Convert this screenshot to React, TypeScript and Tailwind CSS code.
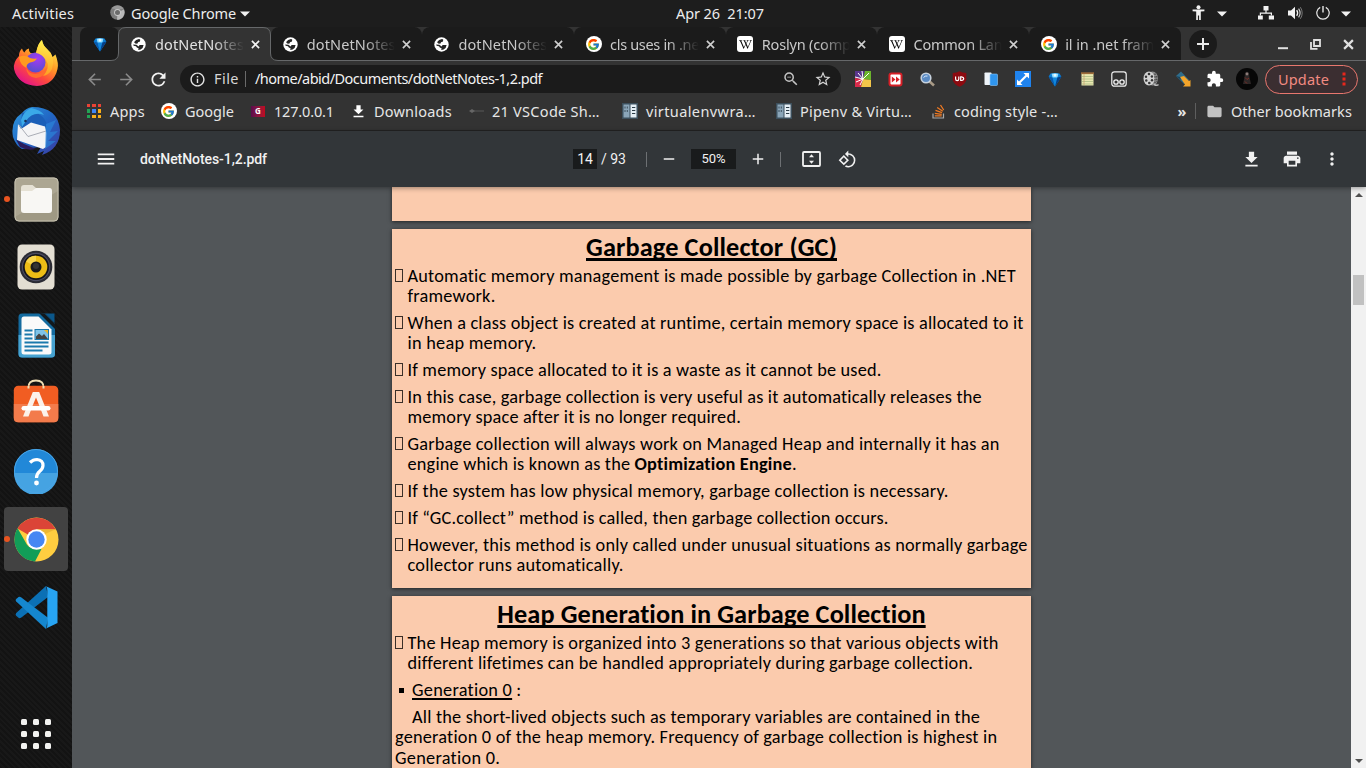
import { useLayoutEffect, useRef } from "react";
import type { ReactNode } from "react";
import { FcGoogle } from "react-icons/fc";
import { FaWikipediaW } from "react-icons/fa";
import {
  MdArrowBack, MdArrowForward, MdRefresh, MdInfoOutline, MdZoomOut, MdStarBorder, MdExtension,
  MdFolder, MdMenu, MdFileDownload, MdPrint, MdMoreVert, MdRotate90DegreesCcw, MdAdd, MdRemove,
} from "react-icons/md";

/* Text run tracked so that it fills exactly `w` pixels. */
function Fit({ w, className = "", children }: { w: number; className?: string; children: ReactNode }) {
  const ref = useRef<HTMLSpanElement>(null);
  useLayoutEffect(() => {
    const el = ref.current;
    if (!el) return;
    el.style.letterSpacing = "0px";
    const natural = el.getBoundingClientRect().width;
    const n = (el.textContent || "x").length;
    el.style.letterSpacing = `${(w - natural) / n}px`;
  }, [w]);
  return <span ref={ref} className={`inline-block shrink-0 whitespace-pre ${className}`}>{children}</span>;
}

/* ---------- small icons ---------- */
function Globe() {
  return (
    <svg width="15" height="15" viewBox="0 0 15 15" className="shrink-0">
      <circle cx="7.5" cy="7.5" r="7.2" fill="#fff" />
      <path d="M8 2 Q4.600 2.300 3 5.200 L4.800 6.800 L6.600 6.600 L7 5.200 L9 4.600 L9.200 2.600Z" fill="#262626" />
      <path d="M2.200 7.400 L5.400 7.800 L7.600 9.400 L8.600 8 L12.600 8 Q12.400 11 9.600 12.600 L7.200 13 L7.600 11.200 L5.800 10.400 L5 9.200 L2.600 8.800Z" fill="#262626" />
    </svg>
  );
}
function GoogleDisc({ className }: { className: string }) {
  return <span className={`flex size-4 shrink-0 items-center justify-center rounded-full bg-white ${className}`}><FcGoogle size={13} /></span>;
}
function Wiki({ className }: { className: string }) {
  return <span className={`flex size-4 shrink-0 items-center justify-center rounded-[3px] bg-white text-black ${className}`}><FaWikipediaW size={13} /></span>;
}
function Gem() {
  return (
    <svg width="14" height="15" viewBox="0 0 14 15" className="shrink-0">
      <path d="M2.500 1.500 Q7 .5 11.500 1.500 L13.300 4.500 L12 7 L7 14.500 L2 7 L.7 4.500 Z" fill="#0a7fd8" />
      <path d="M.7 4.500 L4.600 5.500 L7 14.500 L2 7Z" fill="#0b5aab" />
      <path d="M4.600 5.500 H9.400 L7 14.500 Z" fill="#1187dc" />
      <path d="M3.600 1.800 Q7 .8 10.400 1.800 L9.400 5.500 H4.600 Z" fill="#8fdcff" />
      <path d="M5.500 2 H8.500 L8 4.500 H6Z" fill="#e4f7ff" />
      <path d="M9.400 5.500 L13.300 4.500 L12 7 L7 14.500 Z" fill="#073f86" />
    </svg>
  );
}
function Cross({ size, sw, color }: { size: number; sw: number; color: string }) {
  return (
    <svg width={size} height={size} viewBox="0 0 10 10" className="shrink-0">
      <path d="M1 1 L9 9 M9 1 L1 9" stroke={color} strokeWidth={sw} />
    </svg>
  );
}
function Caret({ className }: { className: string }) {
  return <svg width="10" height="6" viewBox="0 0 10 6" className={`shrink-0 ${className}`}><path d="M0 .4 H10 L5 5.6 Z" fill="#f2f2f2" /></svg>;
}
function Book({ className }: { className: string }) {
  return (
    <svg width="16" height="16" viewBox="0 0 16 16" className={`shrink-0 ${className}`}>
      <rect width="16" height="16" fill="#3c4f5c" />
      <rect x="1.5" y="1.5" width="6" height="13" fill="#8aa5b8" />
      <rect x="8.5" y="1.5" width="6" height="13" fill="#e4eef5" />
      <path d="M3 3.5v2M3 7v2M5.3 3.5v2M5.3 7v2" stroke="#3c4f5c" strokeWidth="1" />
      <path d="M10 4.5h3.3M10 7.5h3.3M10 10.5h3.3" stroke="#2b3b46" strokeWidth="1.2" />
    </svg>
  );
}

/* ---------- system bar ---------- */
function SystemBar() {
  return (
    <header className="flex h-[27px] items-center bg-[#1d1d1d] pb-[2px] text-[14.5px] leading-5 text-[#ececec]">
      <Fit w={62} className="ml-3">Activities</Fit>
      <svg width="15" height="15" viewBox="0 0 15 15" className="ml-[36px] shrink-0">
        <circle cx="7.5" cy="7.5" r="7.3" fill="#7d7d7d" />
        <path d="M7.5 7.5 L13.8 4.5 A7.3 7.3 0 0 1 7 14.8 Z" fill="#b9b9b9" />
        <path d="M1.5 3.5 A7.3 7.3 0 0 1 13.8 4.2 H7.5 Z" fill="#999" />
        <circle cx="7.5" cy="7.5" r="3.4" fill="#c9c9c9" /><circle cx="7.5" cy="7.5" r="2.5" fill="#6b6b6b" />
      </svg>
      <Fit w={105} className="ml-[6px]">Google Chrome</Fit>
      <Caret className="ml-[4px] mt-[2px]" />
      <Fit w={88} className="ml-[426px]">Apr 26  21:07</Fit>
      <svg width="13" height="16" viewBox="0 0 13 16" className="ml-[428px] shrink-0">
        <circle cx="6.5" cy="2.2" r="2" fill="#f2f2f2" />
        <path d="M.6 4.6 H12.4 V6.2 L8.8 6.6 V15 H7.1 V10.6 H5.9 V15 H4.2 V6.6 L.6 6.2 Z" fill="#f2f2f2" />
      </svg>
      <Caret className="ml-[12px] mt-[2px]" />
      <svg width="16" height="14" viewBox="0 0 16 14" className="ml-[31px] shrink-0">
        <path d="M5.5 0h5v4.4h-5zM0 9.4h4.8V13.6H0zM10.8 9.4H16V13.6h-5.2z" fill="#f2f2f2" />
        <path d="M8 4v3M2.4 9.6V7.2H13.4V9.6" stroke="#f2f2f2" strokeWidth="1.2" fill="none" />
      </svg>
      <svg width="15" height="14" viewBox="0 0 15 14" className="mt-px ml-[14px] shrink-0">
        <path d="M0 4.5H3L7 .8V13.2L3 9.5H0Z" fill="#f2f2f2" />
        <path d="M8.7 4.2Q10.6 7 8.7 9.8" stroke="#f2f2f2" strokeWidth="1.3" fill="none" />
        <path d="M10.6 2.6Q13.6 7 10.6 11.4" stroke="#d0d0d0" strokeWidth="1.1" fill="none" />
        <path d="M12.4 1.2Q16 7 12.4 12.8" stroke="#777" strokeWidth="1" fill="none" />
      </svg>
      <svg width="14" height="14" viewBox="0 0 14 14" className="ml-[13px] shrink-0">
        <path d="M4.2 1.4A6.2 6.2 0 1 0 9.8 1.4" stroke="#e8e8e8" strokeWidth="1.2" fill="none" /><path d="M7 0V6.4" stroke="#e8e8e8" strokeWidth="1.4" />
      </svg>
      <Caret className="ml-[11px] mt-[2px]" />
    </header>
  );
}

/* ---------- dock ---------- */
function Firefox() {
  return (
    <svg width="46" height="46" viewBox="0 0 46 46">
      <defs>
        <linearGradient id="ffb" x1=".8" y1=".1" x2=".25" y2=".95"><stop offset="0" stopColor="#ffe84a" /><stop offset=".38" stopColor="#ff9a26" /><stop offset=".68" stopColor="#ff4a3c" /><stop offset="1" stopColor="#e31587" /></linearGradient>
        <radialGradient id="ffp" cx=".6" cy=".3" r=".8"><stop offset="0" stopColor="#a53af4" /><stop offset="1" stopColor="#4a52c8" /></radialGradient>
        <linearGradient id="ffy" x1=".6" y1="0" x2=".5" y2="1"><stop offset="0" stopColor="#fff44f" /><stop offset="1" stopColor="#ff9b22" /></linearGradient>
      </defs>
      <path d="M6 16 Q6 11 9 8.500 Q9.500 11 11.500 12.500 Q13 9 16 8.500 Q15.500 11.500 17.500 13 L23 13.500 Q25 3 29 0 Q29.500 5 34 9 Q38 12 39.500 17 L42.500 14.500 Q46 24 44.500 29 Q41 45 24 46 Q5 45 1 29 Q0 22 6 16Z" fill="url(#ffb)" />
      <circle cx="22.500" cy="22.500" r="10" fill="url(#ffp)" />
      <path d="M23 13 Q25 3 29 0 Q29.500 5 34 9 Q43 17 39 29 Q36 35 30 36 Q38 27 33 20 Q29 14 23 13Z" fill="url(#ffy)" />
      <path d="M6 17 Q12 14 17 18 Q20 19 24 18.500 Q22 22 17 22.500 Q13 24 13.500 28 Q7 25 6 17Z" fill="#ff9a20" />
      <path d="M13 26 Q14 33 22 34 Q30 34 34 27 Q33 37 23 38 Q13 37 13 26Z" fill="#ff6b30" />
    </svg>
  );
}
function Thunderbird() {
  return (
    <svg width="48" height="48" viewBox="0 0 48 48">
      <defs><linearGradient id="tb" x1="0" y1="0" x2="1" y2="1"><stop offset="0" stopColor="#2f9be0" /><stop offset=".5" stopColor="#2166c4" /><stop offset="1" stopColor="#3d3aa0" /></linearGradient></defs>
      <path d="M20 0 Q46 0 48 23 Q48 42 30 48 L32 44 L25 47 L29 40 L10 42 Q4 39 1 30 Q-2 14 10 6 Q14 1 20 0Z" fill="url(#tb)" />
      <path d="M10 6 Q26 2 33 13 Q37 20 34 30 L30 18 L10 21 Q9 12 10 6Z" fill="#1b5fb8" />
      <path d="M19 1 Q29 3 32 8 Q21 4 14 14 L10 20 L9 13 Q12 4 19 1Z" fill="#3aa9e8" />
      <path d="M6 17 L9 22 L19 15.500 L33 19.500 L34.500 26 L34 40 L31 42 L5 33 Z" fill="#f4f4f6" />
      <path d="M7 18 L16 29.500 L34 24" stroke="#aaadb6" strokeWidth="1" fill="none" />
      <path d="M4 32.500 L12 37 L24 42 Q16 44 8 40Z" fill="#2b1c5c" />
      <path d="M34 17 L44 13 L38 25 L46 24 L36 34 L44 34 L33 42Z" fill="#2b87dc" opacity=".65" />
      <circle cx="13.500" cy="14" r="1.300" fill="#17325c" />
    </svg>
  );
}
function Files() {
  return (
    <svg width="45" height="45" viewBox="0 0 45 45">
      <rect x=".5" y=".5" width="44" height="44" rx="4.500" fill="#9f9984" /><path d="M5 1H40Q44 1 44 5V14L1 40V5Q1 1 5 1Z" fill="#aca692" />
      <rect x="1" y="1" width="43" height="43" rx="4" fill="none" stroke="#c4bfae" strokeWidth="1" />
      <path d="M7 11Q7 8 10 8H18.500L22 11V16H7Z" fill="#e5e1d4" /><path d="M7 14H18L22 11H35.500Q38 11 38 14V33Q38 36 35 36H10Q7 36 7 33Z" fill="#f8f7f4" />
    </svg>
  );
}
function Rhythmbox() {
  return (
    <svg width="38" height="46" viewBox="0 0 38 46">
      <rect x=".5" y=".5" width="37" height="45" rx="4.500" fill="#e3ded2" /><circle cx="19" cy="23" r="16.300" fill="#2b2b33" /><circle cx="19" cy="23" r="14.200" fill="#4b4b60" />
      <circle cx="19" cy="23" r="13" fill="#15151a" /><circle cx="19" cy="23" r="11.300" fill="#edbd16" /><path d="M19 23 L9 17.500 A11.300 11.300 0 0 1 19 11.700Z" fill="#f7d44b" />
      <circle cx="19" cy="23" r="5.500" fill="#1b1b1b" /><circle cx="19" cy="22" r="3" fill="#333" />
    </svg>
  );
}
function Writer() {
  return (
    <svg width="37" height="45" viewBox="0 0 37 45">
      <path d="M4 .5H27L37 11V41Q37 44.500 33.500 44.500H4Q.5 44.500 .5 41V4Q.5 .5 4 .5Z" fill="#146b9f" />
      <path d="M.5 22H37V41Q37 44.500 33.500 44.500H4Q.5 44.500 .5 41Z" fill="#46a2d0" />
      <path d="M27 .5H36.500V10Z" fill="#0b578a" /><path d="M21 0 L37 16 V11 L26.500 .500Z" fill="#12181c" />
      <path d="M6 3.500H20.500L33.500 16.500V39Q33.500 41.500 31 41.500H6Q3.500 41.500 3.500 39V6Q3.500 3.500 6 3.500Z" fill="#fafafa" />
      <path d="M6.500 17.500h8M6.500 21.500h8M6.500 25.500h8M6.500 29.500h24M6.500 33.500h24M6.500 37.500h18" stroke="#1b79ac" strokeWidth="2" />
      <rect x="17" y="16.500" width="13.500" height="10" fill="#7ec3e8" stroke="#1b79ac" /><path d="M18 26V23.500l3-3 3 2.500 2-2 4 5Z" fill="#444" /><path d="M26 17h4v4Z" fill="#e9b72c" />
    </svg>
  );
}
function Software() {
  return (
    <svg width="46" height="44" viewBox="0 0 46 44" className="-mt-[5px]">
      <path d="M15.500 9 Q15 1.500 23 1.500 Q31 1.500 30.500 9" stroke="#f0dfb4" strokeWidth="2" fill="none" />
      <rect x=".8" y="6.800" width="44.500" height="36.500" rx="4.500" fill="#f15d22" /><path d="M.8 25H45.300V39Q45.300 43.300 41 43.300H5Q.8 43.300 .8 39Z" fill="#f37b4b" />
      <path d="M19.800 13H26.200L36 37.500H30.500L28 31H18L15.500 37.500H10Z M23 18.500L19.500 27H26.500Z" fill="#fbf1ea" fillRule="evenodd" /><rect x="8.500" y="27" width="29" height="4.500" rx="2.200" fill="#fff" />
      <path d="M15.500 7V9.500M30.500 7V9.500" stroke="#f0dfb4" strokeWidth="2" />
    </svg>
  );
}
function Help() {
  return (
    <svg width="46" height="46" viewBox="0 0 46 46">
      <circle cx="23" cy="23" r="22" fill="#2188d8" /><path d="M1 25H45A22 22 0 0 1 1 25Z" fill="#45a3e2" /><circle cx="23" cy="23" r="21.500" fill="none" stroke="#4aa5e6" />
      <path d="M17 14.500Q20 11.500 24 11.500Q30 12 30 17.500Q30 20.500 26.500 23.500Q23.500 26 23.500 30" fill="none" stroke="#fff" strokeWidth="3.200" /><circle cx="23.500" cy="35" r="2.400" fill="#fff" />
    </svg>
  );
}
function Chrome() {
  return (
    <svg width="45" height="45" viewBox="0 0 45 45">
      <circle cx="22.500" cy="22.500" r="22" fill="#ffcd40" />
      <path d="M22.500 22.500 L3.450 11.500 A22 22 0 0 1 41.800 12.300 H22.500Z" fill="#db4437" />
      <path d="M3.600 11.200 L13 27.800 Q17 33 27.500 32 L21 44.450 A22 22 0 0 1 3.600 11.200Z" fill="#129d58" />
      <path d="M22.500 12.300H41.800L31 17Z" fill="#e0a92c" opacity=".6" />
      <circle cx="22.500" cy="22.500" r="10.200" fill="#fff" /><circle cx="22.500" cy="22.500" r="8.200" fill="#4687f3" />
    </svg>
  );
}
function VSCode() {
  return (
    <svg width="43" height="43" viewBox="0 0 43 43">
      <path d="M31 0 L1.200 27 Q0 28.500 1.200 29.700 L3.500 31.800 Q4.600 32.500 6 31.700 L33 11Z" fill="#0b70b5" />
      <path d="M31 43 L1.200 15.600 Q0 14.300 1.200 13 L3.500 11 Q4.600 10.300 6 11.200 L33 31.800Z" fill="#1587cf" />
      <path d="M31 .2 L42.500 5.500V37L31 42.600 Q32.300 41.500 32.300 39.500V4Q32.300 1.500 31 .2Z" fill="#27a4f3" />
    </svg>
  );
}
const dock: { icon: ReactNode; dot?: boolean; active?: boolean }[] = [
  { icon: <Firefox /> }, { icon: <Thunderbird /> }, { icon: <Files />, dot: true }, { icon: <Rhythmbox /> }, { icon: <Writer /> },
  { icon: <Software /> }, { icon: <Help /> }, { icon: <Chrome />, dot: true, active: true }, { icon: <VSCode /> },
];
function Dock() {
  return (
    <aside className="flex w-[72px] shrink-0 flex-col items-center justify-between bg-[#151515] bg-[repeating-linear-gradient(45deg,#131313_0_2px,#181818_2px_4px)] pt-1 pb-[19px]">
      <div className="flex flex-col gap-1">
        {dock.map((d, i) => (
          <div key={i} className={`relative flex size-16 items-center justify-center rounded ${d.active ? "bg-[#424242]" : ""}`}>
            {d.icon}
            {d.dot && <i className="absolute top-[29px] left-0 size-[6px] rounded-full bg-[#e95420]" />}
          </div>
        ))}
      </div>
      <div className="grid grid-cols-3 gap-[6px]">
        {Array.from({ length: 9 }, (_, i) => <i key={i} className="size-[6px] rounded-[1.5px] bg-[#f2f2f0]" />)}
      </div>
    </aside>
  );
}

/* ---------- browser ---------- */
const tabs: { icon: "globe" | "google" | "wiki"; text: string }[] = [
  { icon: "globe", text: "dotNetNotes" }, { icon: "globe", text: "dotNetNotes" }, { icon: "globe", text: "dotNetNotes" },
  { icon: "google", text: "cls uses in .ne" }, { icon: "wiki", text: "Roslyn (comp" }, { icon: "wiki", text: "Common Lan" }, { icon: "google", text: "il in .net fram" },
];
function TabStrip() {
  return (
    <div className="flex h-[34px] bg-[#333]">
      <div className="ml-2 flex w-[39px] items-center justify-center rounded-t-lg bg-[#1b1b1b]"><Gem /></div>
      {tabs.map((t, i) => (
        <div key={i} className={`relative flex w-[151.7px] shrink-0 items-center pl-3 ${i === 0 ? "z-10" : "rounded-t-lg bg-[#1b1b1b]"}`}>
          {i === 0 && (
            <svg width="1294" height="34" viewBox="-47 0 1294 34" className="pointer-events-none absolute top-0 -left-[47px]">
              <path d="M-8 33.500 Q-.5 33.500 -.5 26 V8 Q-.5 .5 7 .5 H144 Q151.500 .5 151.500 8 V26 Q151.500 33.500 159 33.500 V34 H-8Z" fill="#333" />
              <path d="M-47 33.500 H-8 Q-.5 33.500 -.5 26 V8 Q-.5 .5 7 .5 H144 Q151.500 .5 151.500 8 V26 Q151.500 33.500 159 33.500 H1247" fill="none" stroke="#66686a" />
            </svg>
          )}
          <div className="relative flex w-[15px] items-center justify-center">
            {t.icon === "globe" && <Globe />}
            {t.icon === "google" && <GoogleDisc className="" />}
            {t.icon === "wiki" && <Wiki className="" />}
          </div>
          <div className={`relative ml-[9px] flex w-[88.5px] overflow-hidden text-[14.5px] leading-5 [mask-image:linear-gradient(90deg,#000_65%,transparent_100%)] ${i === 0 ? "text-[#e3e3e3]" : "text-[#c9c9c9]"}`}>
            <Fit w={89}>{t.text}</Fit>
          </div>
          <div className="relative ml-[7px]"><Cross size={9} sw={1.8} color={i === 0 ? "#f2f2f2" : "#cfcfcf"} /></div>
          {i > 0 && i < 6 && <i className="absolute top-[8px] -right-px h-[19px] w-px bg-[#5a5a5a]" />}
        </div>
      ))}
      <div className="mt-[3px] ml-[8px] flex size-7 shrink-0 items-center justify-center rounded-full bg-[#1b1b1b] text-[#e8e8e8]">
        <svg width="12" height="12" viewBox="0 0 12 12"><path d="M6 0V12M0 6H12" stroke="#e8e8e8" strokeWidth="2" /></svg>
      </div>
      <svg width="10" height="3" viewBox="0 0 10 3" className="mt-[20px] ml-[61px] shrink-0"><path d="M0 1.200H10" stroke="#e0e0e0" strokeWidth="2" /></svg>
      <svg width="11" height="11" viewBox="0 0 11 11" className="mt-[12px] ml-[22px] shrink-0"><path d="M4 1H10V7H4ZM1 3V9.800H7.500" stroke="#e0e0e0" strokeWidth="1.800" fill="none" /></svg>
      <div className="mt-[12px] ml-[22px]"><Cross size={11} sw={2} color="#e0e0e0" /></div>
    </div>
  );
}

const extensions: ReactNode[] = [
  <svg width="16" height="16" viewBox="0 0 16 16"><path d="M0 0H10L8 8 0 7Z" fill="#59358c" /><path d="M10 0H16V9L8 8Z" fill="#6cb52d" /><path d="M0 7L8 8 6 16H0Z" fill="#d92a4a" /><path d="M8 8L16 9V16H6Z" fill="#f3c74a" /><path d="M8 8L1 11M8 8L14 2M8 8L3 2M8 8L7 0M8 8L0 6M8 8L5 14" stroke="#fff" strokeWidth="1" /></svg>,
  <svg width="15" height="15" viewBox="0 0 15 15"><rect x=".5" y=".5" width="14" height="14" rx="3" fill="#d61f26" /><rect x="2.500" y="2.500" width="10" height="10" rx="1" fill="#fff" /><path d="M3.800 4.500 7.500 7.500 3.800 10.500ZM8 4.500 11.700 7.500 8 10.500Z" fill="#d61f26" /></svg>,
  <svg width="15" height="15" viewBox="0 0 15 15"><path d="M9 9L14 13.500" stroke="#a89a86" strokeWidth="2.600" /><circle cx="6" cy="6" r="4.800" fill="#5c8cc4" stroke="#c7d2de" strokeWidth="1.600" /><path d="M3.500 5.500Q5 3.500 7.500 4" stroke="#dcecff" fill="none" /></svg>,
  <svg width="15" height="16" viewBox="0 0 15 16"><path d="M7.500 .3Q10 2 14.300 2V9Q13 13.500 7.500 15.700Q2 13.500 .7 9V2Q5 2 7.500 .3Z" fill="#8c0a10" /><path d="M3.600 5.500V8Q3.600 9.700 5.200 9.700Q6.800 9.700 6.800 8V5.500M8.700 5.800H9.600Q11.700 6 11.700 7.600Q11.700 9.400 9.600 9.500H8.700Z" stroke="#fff" strokeWidth="1.200" fill="none" /></svg>,
  <svg width="14" height="14" viewBox="0 0 14 14"><rect x=".5" y=".5" width="7" height="12.500" rx=".8" fill="#eef3f8" /><rect x="6" y="2" width="7.500" height="11.500" rx="1" fill="#2f95ee" stroke="#8cc6f7" strokeWidth=".6" /></svg>,
  <svg width="16" height="16" viewBox="0 0 16 16"><rect width="16" height="16" fill="#1f83ee" /><path d="M4 12L12 4" stroke="#fff" strokeWidth="2.200" /><path d="M8.500 2H14V7.500ZM2 8.500V14H7.500Z" fill="#fff" /></svg>,
  <Gem />,
  <svg width="13" height="14" viewBox="0 0 13 14"><rect x=".5" y="1" width="12" height="12.500" fill="#e9e7b0" /><path d="M0 1.200H13" stroke="#9c6b3a" strokeWidth="1.800" /><path d="M1 4.500H12M1 7H12M1 9.500H12M1 12H12" stroke="#a9bd84" strokeWidth=".8" /><path d="M3 2V13" stroke="#c99b6a" strokeWidth=".7" /></svg>,
  <svg width="16" height="16" viewBox="0 0 16 16"><rect x=".8" y=".8" width="14.400" height="14.400" rx="2.500" fill="none" stroke="#f2f2f2" strokeWidth="1.200" /><circle cx="5" cy="11" r="2.200" fill="none" stroke="#f2f2f2" strokeWidth="1.300" /><circle cx="11" cy="11" r="2.200" fill="none" stroke="#f2f2f2" strokeWidth="1.300" /></svg>,
  <svg width="16" height="16" viewBox="0 0 16 16"><ellipse cx="9.500" cy="7.500" rx="5.500" ry="7" fill="#8d8d8d" /><ellipse cx="6" cy="7.500" rx="5.500" ry="7" fill="#d2d2d2" /><path d="M11 13.500Q14 15 15.500 13.500" stroke="#bdbdbd" strokeWidth="1.500" fill="none" /><circle cx="6" cy="3" r="1.300" fill="#333" /><circle cx="3" cy="5.800" r="1.200" fill="#333" /><circle cx="3.300" cy="9.500" r="1.200" fill="#333" /><circle cx="6.300" cy="12" r="1.300" fill="#333" /><circle cx="9" cy="9.300" r="1.200" fill="#333" /><circle cx="8.900" cy="5.500" r="1.200" fill="#333" /><path d="M12 2.500V12.500M13.800 5V11" stroke="#333" strokeDasharray="1.500 1.200" /></svg>,
  <svg width="16" height="16" viewBox="0 0 16 16"><path d="M1 5L6 .5L14 9L9 13Z" fill="#2f6d8c" /><path d="M5 6L9 5L14 10L15.500 9V15.500H8L10 13.500Z" fill="#f4a52a" /><path d="M1 5L5 6L6 9Z" fill="#1b4258" /></svg>,
  <MdExtension size={18} color="#fff" />,
];
function AddressBar() {
  return (
    <div className="flex h-[35px] items-center bg-[#333] pt-px">
      <MdArrowBack size={19} className="ml-[13px] shrink-0 text-[#8a8a8a]" />
      <MdArrowForward size={19} className="ml-[13px] shrink-0 text-[#8a8a8a]" />
      <MdRefresh size={21} className="ml-[12px] shrink-0 text-[#f2f2f2]" />
      <div className="ml-[11px] flex h-7 w-[661px] shrink-0 items-center rounded-full bg-[#1b1b1b] text-[14.5px] leading-5 text-[#f2f2f2]">
        <MdInfoOutline size={17} className="ml-[9px] shrink-0 text-[#e4e4e4]" />
        <Fit w={25} className="ml-[8px] -mt-[2px] text-[#d6d6d6]">File</Fit>
        <i className="ml-[6px] h-4 w-px bg-[#6a6a6a]" />
        <Fit w={287} className="ml-[9px] -mt-[2px]">/home/abid/Documents/dotNetNotes-1,2.pdf</Fit>
        <MdZoomOut size={18} className="ml-[240px] shrink-0 text-[#c4c4c4]" />
        <MdStarBorder size={18} className="ml-[14px] shrink-0 text-[#d4d4d4]" />
      </div>
      <div className="ml-[6px] flex shrink-0">
        {extensions.map((e, i) => <span key={i} className="flex w-8 items-center justify-center">{e}</span>)}
      </div>
      <svg width="22" height="22" viewBox="0 0 22 22" className="ml-[5px] shrink-0">
        <circle cx="11" cy="11" r="11" fill="#070707" /><path d="M9 5Q11 2.500 13 5L13.500 9 15 16H7L8.500 9Z" fill="#2d2727" /><circle cx="11" cy="6" r="1.400" fill="#8b7b78" /><path d="M9 9.500L11 11.500 13 10M9 13.500L11 15.500" stroke="#7c2c24" fill="none" />
      </svg>
      <div className="ml-[7px] flex h-[29px] w-[93px] shrink-0 items-center rounded-full border border-[#e8776e] bg-[#3b2e31] text-[14.5px] text-[#f28b82]">
        <Fit w={51} className="ml-[12px] leading-5">Update</Fit>
        <svg width="4" height="14" viewBox="0 0 4 14" className="ml-[13px]"><path d="M.5 .5h3v3h-3zM.5 5.500h3v3h-3zM.5 10.500h3v3h-3z" fill="#e8261c" /></svg>
      </div>
    </div>
  );
}

const appColors = ["bg-[#ea4335]", "bg-[#ea4335]", "bg-[#ea4335]", "bg-[#23a455]", "bg-[#3f86f5]", "bg-[#fbaf18]", "bg-[#23a455]", "bg-[#fbaf18]", "bg-[#fbaf18]"];
function Bookmarks() {
  return (
    <div className="flex h-[35px] items-center border-b border-[#232323] bg-[#333] pb-[4px] text-[14.5px] leading-5 text-[#e6e6e6]">
      <div className="ml-[15px] grid shrink-0 grid-cols-3 gap-[2px]">{appColors.map((c, i) => <i key={i} className={`size-[3.3px] ${c}`} />)}</div>
      <Fit w={35} className="ml-[9px]">Apps</Fit>
      <GoogleDisc className="ml-[16px]" />
      <Fit w={49} className="ml-[8px]">Google</Fit>
      <span className="ml-[17px] flex h-[11px] w-[14px] shrink-0 items-center justify-center bg-linear-to-r from-[#5a0a4c] to-[#c20a1c] text-[8px] leading-none font-bold text-white">G</span>
      <Fit w={60} className="ml-[9px]">127.0.0.1</Fit>
      <MdFileDownload size={17} className="ml-[16px] shrink-0 text-white" />
      <Fit w={78} className="ml-[7px]">Downloads</Fit>
      <svg width="15" height="6" viewBox="0 0 15 6" className="ml-[17px] shrink-0"><path d="M5 3H15" stroke="#595959" /><path d="M0 3L3 1L6 3L3 5Z" fill="#666" /></svg>
      <Fit w={108} className="ml-[8px]">21 VSCode Sh…</Fit>
      <Book className="ml-[22px]" />
      <Fit w={110} className="ml-[8px]">virtualenvwra…</Fit>
      <Book className="ml-[20px]" />
      <Fit w={112} className="ml-[8px]">Pipenv & Virtu…</Fit>
      <svg width="13" height="15" viewBox="0 0 13 15" className="ml-[20px] shrink-0"><path d="M1 9.500V14H11.500V9.500" stroke="#a8a8a8" strokeWidth="1.200" fill="none" /><path d="M2.800 11.800H9.700M2.800 9.300L9.700 10.300M3.500 6.400L10 8.600M5.200 3.500L10.800 7.200M8.500 1L11.700 6" stroke="#ef7a23" strokeWidth="1.300" /></svg>
      <Fit w={104} className="ml-[9px]">coding style -…</Fit>
      <Fit w={9} className="ml-[119.5px] font-bold">»</Fit>
      <i className="ml-[9px] h-4 w-px bg-[#5e5e5e]" />
      <MdFolder size={17} className="ml-[10px] shrink-0 text-[#c2c2c2]" />
      <Fit w={121} className="ml-[7.5px]">Other bookmarks</Fit>
    </div>
  );
}

function PdfToolbar() {
  return (
    <div className="relative z-10 flex h-14 shrink-0 items-center bg-[#323639] font-[Roboto,sans-serif] text-[14px] leading-5 text-[#f1f1f1] shadow-[0_1px_5px_rgba(0,0,0,0.4)]">
      <MdMenu size={22} className="ml-[23px] shrink-0" />
      <Fit w={127} className="ml-[23px] font-medium">dotNetNotes-1,2.pdf</Fit>
      <span className="ml-[306px] flex h-5 w-6 shrink-0 items-center justify-center bg-[#191b1c]">14</span>
      <Fit w={25} className="ml-[4px]">/ 93</Fit>
      <i className="ml-[20px] h-[15px] w-px bg-[#6d7073]" />
      <MdRemove size={18} className="ml-[13px] shrink-0" />
      <span className="ml-[13px] flex h-5 w-[45px] shrink-0 items-center justify-center bg-[#191b1c] text-[13px]">50%</span>
      <MdAdd size={18} className="ml-[13px] shrink-0" />
      <i className="ml-[13px] h-[15px] w-px bg-[#6d7073]" />
      <svg width="19" height="16" viewBox="0 0 19 16" className="ml-[20.5px] shrink-0"><rect x="1" y="1" width="17" height="14" rx="1" fill="none" stroke="#f1f1f1" strokeWidth="1.800" /><path d="M9.500 3.300L12 6.200H7ZM9.500 12.700L7 9.800H12Z" fill="#f1f1f1" /></svg>
      <MdRotate90DegreesCcw size={19} className="ml-[17px] shrink-0" />
      <MdFileDownload size={21} className="ml-[384.5px] shrink-0" />
      <MdPrint size={20} className="ml-[20px] shrink-0" />
      <MdMoreVert size={20} className="ml-[20px] shrink-0" />
    </div>
  );
}

/* ---------- document ---------- */
function Title({ w, children }: { w: number; children: string }) {
  return (
    <h2 className="flex h-[36.8px] justify-center pt-[1.5px] text-[26.3px] leading-8 font-bold">
      <Fit w={w} className="underline decoration-[3px] underline-offset-[2px] [text-decoration-skip-ink:none]">{children}</Fit>
    </h2>
  );
}
function Bullet({ lines }: { lines: [number, ReactNode][] }) {
  return (
    <li className="flex">
      <i className="mt-[3px] mr-[4.500px] ml-[3px] h-[13px] w-2 shrink-0 border border-[#3b2f28]" />
      <div className="flex flex-col items-start">{lines.map(([w, t], i) => <Fit key={i} w={w} className="h-[20.4px]">{t}</Fit>)}</div>
    </li>
  );
}
const page = "w-[639px] shrink-0 bg-[#fbcbad] text-black shadow-[0_1px_4px_rgba(0,0,0,0.6)]";
function Viewer() {
  return (
    <div className="flex min-h-0 flex-1 bg-[#525659]">
      <main className="flex flex-1 flex-col gap-2 overflow-hidden pl-[320px] font-[Carlito,Lato,sans-serif] text-[18.3px] leading-[20.8px]">
        <section className={`${page} h-[34px]`} />
        <section className={`${page} h-[359px]`}>
          <Title w={251}>Garbage Collector (GC)</Title>
          <ul className="flex flex-col gap-[6.4px]">
            <Bullet lines={[[608, "Automatic memory management is made possible by garbage Collection in .NET"], [88, "framework."]]} />
            <Bullet lines={[[616, "When a class object is created at runtime, certain memory space is allocated to it"], [129, "in heap memory."]]} />
            <Bullet lines={[[474, "If memory space allocated to it is a waste as it cannot be used."]]} />
            <Bullet lines={[[574, "In this case, garbage collection is very useful as it automatically releases the"], [333, "memory space after it is no longer required."]]} />
            <Bullet lines={[[592, "Garbage collection will always work on Managed Heap and internally it has an"], [389, <>engine which is known as the <b>Optimization Engine</b>.</>]]} />
            <Bullet lines={[[541, "If the system has low physical memory, garbage collection is necessary."]]} />
            <Bullet lines={[[481, "If “GC.collect” method is called, then garbage collection occurs."]]} />
            <Bullet lines={[[620, "However, this method is only called under unusual situations as normally garbage"], [216, "collector runs automatically."]]} />
          </ul>
        </section>
        <section className={`${page} h-[359px]`}>
          <Title w={428}>Heap Generation in Garbage Collection</Title>
          <ul className="flex flex-col gap-[6.4px]">
            <Bullet lines={[[591, "The Heap memory is organized into 3 generations so that various objects with"], [565, "different lifetimes can be handled appropriately during garbage collection."]]} />
            <li className="flex h-[20.4px]">
              <i className="mt-[8px] mr-[8px] ml-[7px] size-[5px] shrink-0 bg-black" />
              <Fit w={100} className="underline decoration-[1.5px] underline-offset-2">Generation 0</Fit>
              <Fit w={9}> :</Fit>
            </li>
            <li className="flex flex-col items-start pl-[3px]">
              <Fit w={568} className="ml-[17px] h-[20.4px]">All the short-lived objects such as temporary variables are contained in the</Fit>
              <Fit w={602} className="h-[20.4px]">generation 0 of the heap memory. Frequency of garbage collection is highest in</Fit>
              <Fit w={105} className="h-[20.4px]">Generation 0.</Fit>
            </li>
          </ul>
        </section>
      </main>
      <div className="flex w-[15px] flex-col items-center justify-between bg-[#f1f1f1] pt-[6px] pb-[5px]">
        <div className="flex flex-col items-center gap-[78px]">
          <svg width="8" height="4" viewBox="0 0 8 4"><path d="M4 0L8 4H0Z" fill="#505050" /></svg>
          <div className="h-[30px] w-[11px] bg-[#c1c1c1]" />
        </div>
        <svg width="8" height="4" viewBox="0 0 8 4"><path d="M4 4L8 0H0Z" fill="#505050" /></svg>
      </div>
    </div>
  );
}

export default function App() {
  return (
    <div className="flex h-[768px] w-[1366px] flex-col overflow-hidden bg-black font-['Noto_Sans','Open_Sans',sans-serif]">
      <SystemBar />
      <div className="flex min-h-0 flex-1">
        <Dock />
        <div className="flex w-[1294px] flex-col overflow-hidden">
          <TabStrip />
          <AddressBar />
          <Bookmarks />
          <PdfToolbar />
          <Viewer />
        </div>
      </div>
    </div>
  );
}
